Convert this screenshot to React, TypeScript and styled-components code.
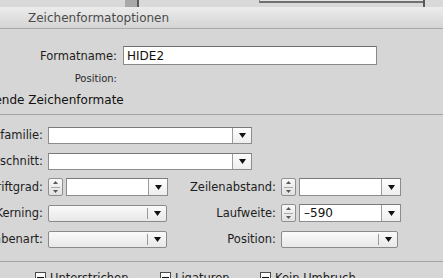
import React from "react";
import styled, { createGlobalStyle } from "styled-components";

const GlobalStyle = createGlobalStyle`
  html, body { margin: 0; padding: 0; background: #d6d6d6; overflow: hidden; }
  body { font-family: "DejaVu Sans", "Liberation Sans", sans-serif; }
  #root { width: 443px; height: 278px; overflow: hidden; }
`;

const Screen = styled.div`
  width: 443px;
  height: 278px;
  overflow: hidden;
  background: #d6d6d6;
  display: flex;
  flex-direction: column;
`;

const Backdrop = styled.div`
  height: 7px;
  flex: none;
  display: flex;
  align-items: flex-start;
  background: #d9d9d9;
`;

const BackScroller = styled.div`
  margin-left: 125px;
  width: 12px;
  height: 7px;
  background: #a9a9a9;
  border-right: 2px solid #5c5c5c;
`;

const BackPanel = styled.div`
  margin-left: 120px;
  width: 163px;
  height: 1px;
  background: #e3e3e3;
  border-left: 1px solid #8a8a8a;
  border-bottom: 2px solid #707070;
`;

const BackEdge = styled.div`
  width: 2px;
  height: 7px;
  background: #5a5a5a;
`;

const TitleBar = styled.div`
  height: 21px;
  flex: none;
  border-bottom: 1px solid #a9a9a9;
  background: linear-gradient(#ececec, #d4d4d4);
  display: flex;
  align-items: center;
  padding-left: 28px;
  font-size: 12px;
  color: #4a4a4a;
`;

const Body = styled.div`
  margin-left: -75px;
  width: 560px;
  padding-top: 17px;
  display: flex;
  flex-direction: column;
  font-size: 11.5px;
  color: #1d1d1d;
`;

const NameGrid = styled.div`
  display: grid;
  grid-template-columns: 192px 254px;
  column-gap: 6px;
  row-gap: 7px;
  align-items: center;
`;

const NameLabel = styled.div<{ $small?: boolean }>`
  text-align: right;
  white-space: nowrap;
  font-size: ${(p) => (p.$small ? "10px" : "11.5px")};
  line-height: 14px;
  color: ${(p) => (p.$small ? "#2a2a2a" : "#1d1d1d")};
`;

const TextField = styled.div`
  box-sizing: border-box;
  height: 19px;
  border: 1px solid #8a8a8a;
  border-top-color: #6f6f6f;
  background: #fff;
  padding-left: 3px;
  font-size: 12px;
  display: flex;
  align-items: center;
  color: #111;
`;

const SectionTitle = styled.div`
  margin-top: 7px;
  padding-left: 14px;
  font-size: 12px;
  line-height: 15px;
  color: #111;
  white-space: nowrap;
`;

const Divider = styled.div<{ $top: number }>`
  margin-top: ${(p) => p.$top}px;
  height: 1px;
  background: #a3a3a3;
`;

const FormGrid = styled.div`
  margin-top: 7px;
  display: grid;
  grid-template-columns: 118px 120px 103px 125px;
  column-gap: 5px;
  grid-auto-rows: 26px;
  align-items: center;
`;

const Label = styled.div`
  text-align: right;
  white-space: nowrap;
  line-height: 14px;
`;

const ComboBox = styled.div<{ $w: number; $h: number; $span?: boolean }>`
  box-sizing: border-box;
  width: ${(p) => p.$w}px;
  height: ${(p) => p.$h}px;
  grid-column: ${(p) => (p.$span ? "2 / 4" : "auto")};
  justify-self: start;
  display: flex;
  border: 1px solid #8c8c8c;
  border-top-color: #7a7a7a;
  background: #fff;
`;

const ComboText = styled.div`
  flex: 1;
  padding-left: 4px;
  display: flex;
  align-items: center;
  font-size: 12px;
  color: #111;
`;

const ComboButton = styled.div`
  width: 18px;
  border-left: 1px solid #9c9c9c;
  background: linear-gradient(#fdfdfd, #eeeeee);
  display: flex;
  align-items: center;
  justify-content: center;
`;

const Select = styled.div<{ $w: number }>`
  box-sizing: border-box;
  width: ${(p) => p.$w}px;
  height: 17px;
  justify-self: start;
  display: flex;
  justify-content: flex-end;
  align-items: center;
  border: 1px solid #8a8a8a;
  border-radius: 2px;
  background: linear-gradient(#fafafa, #e8e8e8);
`;

const SelectDivider = styled.div`
  width: 1px;
  height: 11px;
  background: #9a9a9a;
`;

const SelectArrow = styled.div`
  width: 18px;
  display: flex;
  align-items: center;
  justify-content: center;
`;

const SpinGroup = styled.div`
  display: flex;
  align-items: center;
  gap: 3px;
  justify-self: start;
`;

const Stepper = styled.div`
  box-sizing: border-box;
  width: 15px;
  height: 18px;
  border: 1px solid #8f8f8f;
  border-radius: 2px;
  background: linear-gradient(#f9f9f9, #e1e1e1);
  display: flex;
  flex-direction: column;
`;

const StepHalf = styled.div<{ $lower?: boolean }>`
  flex: 1;
  display: flex;
  align-items: center;
  justify-content: center;
  margin: 0 2px;
  border-top: ${(p) => (p.$lower ? "1px solid #a9a9a9" : "none")};
`;

const CheckRow = styled.div`
  margin-top: 10px;
  padding-left: 110px;
  display: grid;
  grid-template-columns: 125px 100px auto;
`;

const CheckItem = styled.div`
  display: flex;
  align-items: flex-start;
  gap: 4px;
  white-space: nowrap;
`;

const Box = styled.span`
  box-sizing: border-box;
  width: 11px;
  height: 11px;
  border: 1px solid #4a4a4a;
  background: linear-gradient(#ffffff, #e4e4e4);
  display: flex;
  align-items: center;
  justify-content: center;
`;

const Dash = styled.span`
  width: 7px;
  height: 2px;
  background: #111;
`;

const CheckText = styled.span`
  margin-top: -1px;
  line-height: 14px;
`;

const DownArrow = () => (
  <svg width="7" height="5" viewBox="0 0 7 5">
    <polygon points="0,0 7,0 3.5,5" fill="#111" />
  </svg>
);

const StepTri = ({ up }: { up?: boolean }) => (
  <svg width="5" height="3" viewBox="0 0 5 3">
    <polygon points={up ? "2.5,0 5,3 0,3" : "0,0 5,0 2.5,3"} fill="#555" />
  </svg>
);

const Combo = ({ w, h, value = "", span }: { w: number; h: number; value?: string; span?: boolean }) => (
  <ComboBox $w={w} $h={h} $span={span}>
    <ComboText>{value}</ComboText>
    <ComboButton>
      <DownArrow />
    </ComboButton>
  </ComboBox>
);

const Spin = ({ value = "" }: { value?: string }) => (
  <SpinGroup>
    <Stepper>
      <StepHalf>
        <StepTri up />
      </StepHalf>
      <StepHalf $lower>
        <StepTri />
      </StepHalf>
    </Stepper>
    <Combo w={102} h={18} value={value} />
  </SpinGroup>
);

const Popup = ({ w }: { w: number }) => (
  <Select $w={w}>
    <SelectDivider />
    <SelectArrow>
      <DownArrow />
    </SelectArrow>
  </Select>
);

const Check = ({ label }: { label: string }) => (
  <CheckItem>
    <Box>
      <Dash />
    </Box>
    <CheckText>{label}</CheckText>
  </CheckItem>
);

export default function App() {
  return (
    <>
      <GlobalStyle />
      <Screen>
        <Backdrop>
          <BackScroller />
          <BackPanel />
          <BackEdge />
        </Backdrop>
        <TitleBar>Zeichenformatoptionen</TitleBar>
        <Body>
          <NameGrid>
            <NameLabel>Formatname:</NameLabel>
            <TextField>HIDE2</TextField>
            <NameLabel $small>Position:</NameLabel>
            <div />
          </NameGrid>
          <SectionTitle>Grundlegende Zeichenformate</SectionTitle>
          <Divider $top={6} />
          <FormGrid>
            <Label>Schriftfamilie:</Label>
            <Combo w={204} h={17} span />
            <div />

            <Label>Schriftschnitt:</Label>
            <Combo w={204} h={17} span />
            <div />

            <Label>Schriftgrad:</Label>
            <Spin />
            <Label>Zeilenabstand:</Label>
            <Spin />

            <Label>Kerning:</Label>
            <Popup w={119} />
            <Label>Laufweite:</Label>
            <Spin value="–590" />

            <Label>Buchstabenart:</Label>
            <Popup w={119} />
            <Label>Position:</Label>
            <Popup w={117} />
          </FormGrid>
          <Divider $top={9} />
          <CheckRow>
            <Check label="Unterstrichen" />
            <Check label="Ligaturen" />
            <Check label="Kein Umbruch" />
          </CheckRow>
        </Body>
      </Screen>
    </>
  );
}
